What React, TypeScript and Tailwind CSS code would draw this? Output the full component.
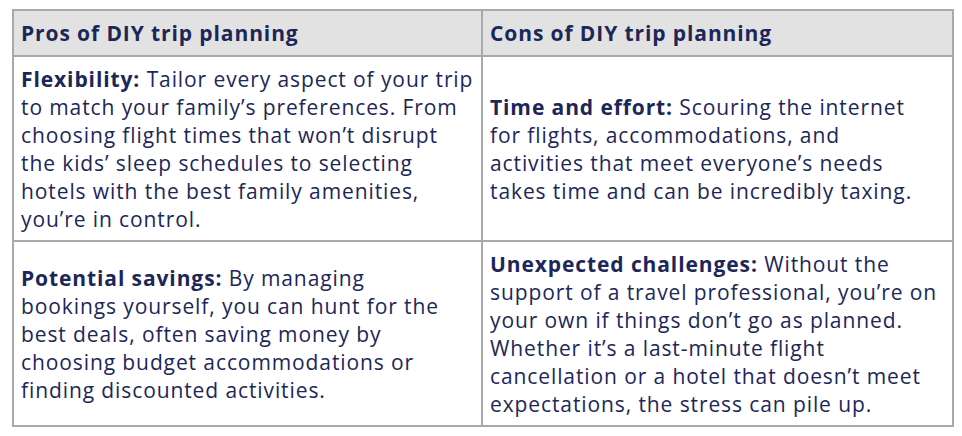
import React from "react";

const font = { fontFamily: '"Open Sans", "Liberation Sans", sans-serif' };

function Lines({ bold, lines }: { bold: string; lines: string[] }) {
  return (
    <div className="whitespace-nowrap">
      {lines.map((l, i) => (
        <div key={i}>
          {i === 0 ? (
            <>
              <span className="font-bold">{bold}</span> {l}
            </>
          ) : (
            l
          )}
        </div>
      ))}
    </div>
  );
}

export default function App() {
  return (
    <div className="bg-white w-[962px] h-[436px] pt-[9px] pl-[12px]" style={font}>
      <table className="table-fixed w-[940px] border-collapse text-[21px] leading-[28px] text-[#1c2759] tracking-[0.9px]">
        <colgroup>
          <col className="w-[469px]" />
          <col className="w-[471px]" />
        </colgroup>
        <thead>
          <tr className="bg-[#e2e2e2]">
            <th className="border-2 border-[#a9a9a9] text-left font-bold pl-[7px] pr-0 py-[7px] h-[46px]">Pros of DIY trip planning</th>
            <th className="border-2 border-[#a9a9a9] text-left font-bold pl-[7px] pr-0 py-[7px]">Cons of DIY trip planning</th>
          </tr>
        </thead>
        <tbody>
          <tr>
            <td className="border-2 border-[#a9a9a9] pl-[7px] pr-0 py-[7px] align-middle h-[185px]">
              <Lines
                bold="Flexibility:"
                lines={[
                  "Tailor every aspect of your trip",
                  "to match your family’s preferences. From",
                  "choosing flight times that won’t disrupt",
                  "the kids’ sleep schedules to selecting",
                  "hotels with the best family amenities,",
                  "you’re in control.",
                ]}
              />
            </td>
            <td className="border-2 border-[#a9a9a9] pl-[7px] pr-0 py-[7px] align-middle">
              <Lines
                bold="Time and effort:"
                lines={[
                  "Scouring the internet",
                  "for flights, accommodations, and",
                  "activities that meet everyone’s needs",
                  "takes time and can be incredibly taxing.",
                ]}
              />
            </td>
          </tr>
          <tr>
            <td className="border-2 border-[#a9a9a9] pl-[7px] pr-0 py-[7px] align-middle h-[185px]">
              <Lines
                bold="Potential savings:"
                lines={[
                  "By managing",
                  "bookings yourself, you can hunt for the",
                  "best deals, often saving money by",
                  "choosing budget accommodations or",
                  "finding discounted activities.",
                ]}
              />
            </td>
            <td className="border-2 border-[#a9a9a9] pl-[7px] pr-0 py-[7px] align-middle">
              <Lines
                bold="Unexpected challenges:"
                lines={[
                  "Without the",
                  "support of a travel professional, you’re on",
                  "your own if things don’t go as planned.",
                  "Whether it’s a last-minute flight",
                  "cancellation or a hotel that doesn’t meet",
                  "expectations, the stress can pile up.",
                ]}
              />
            </td>
          </tr>
        </tbody>
      </table>
    </div>
  );
}
